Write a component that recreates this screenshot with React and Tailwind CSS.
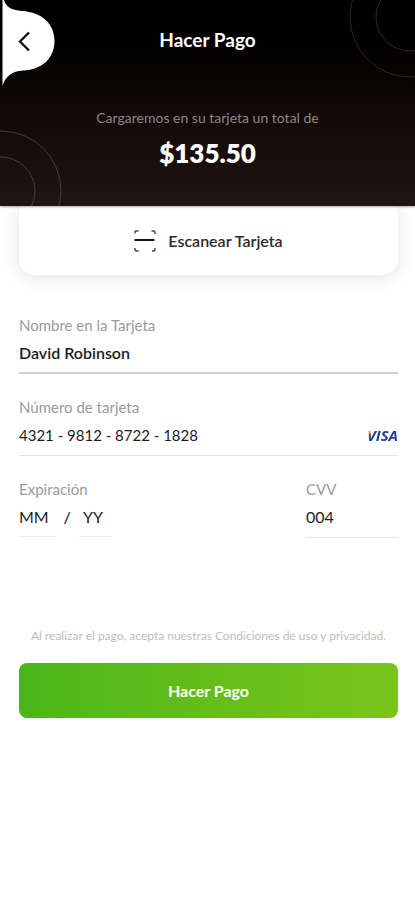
import React, { useState } from "react";

const Rings = ({ className }) => (
    <svg
        viewBox="0 0 122 122"
        fill="none"
        className={className}
        aria-hidden="true"
    >
        <circle cx="61" cy="61" r="60" stroke="currentColor" />
        <circle cx="61" cy="61" r="34" stroke="currentColor" />
    </svg>
);

const ScanIcon = () => (
    <svg
        viewBox="0 0 22 22"
        fill="none"
        stroke="#444444"
        strokeWidth="1.4"
        className="w-[22px] h-[22px]"
        aria-hidden="true"
    >
        <path d="M1 3.500V2Q1 1 2 1H4.500M17.500 1H19.500Q21 1 21 2.500V4M21 18V19.500Q21 21 19.500 21H18M4.500 21H2.500Q1 21 1 19.500V18" />
        <path d="M0.500 10H20.500" stroke="#111111" strokeWidth="2" />
    </svg>
);

const VisaLogo = () => (
    <span
        role="img"
        aria-label="Visa"
        className="bg-[linear-gradient(125deg,#f0a326_20%,#1b3f94_20%)] bg-clip-text font-['Open_Sans',sans-serif] text-[15px] leading-5 font-bold italic text-transparent"
    >
        VISA
    </span>
);

const Field = ({
    id,
    label,
    className,
    lineClassName = "border-b border-[#e4e4e4] pb-2",
    inputClassName = "text-base",
    children,
    ...props
}) => (
    <div className={className}>
        <label htmlFor={id} className="block text-[15px] leading-5 text-[#9a9a9a]">
            {label}
        </label>
        <div className={`flex items-center pt-1.5 ${lineClassName}`}>
            <input
                id={id}
                className={`w-full min-w-0 flex-1 h-6 text-[#1c1c1c] outline-none ${inputClassName}`}
                {...props}
            />
            {children}
        </div>
    </div>
);

const App = () => {
    const [card, setCard] = useState({
        name: "David Robinson",
        number: "4321 - 9812 - 8722 - 1828",
        month: "",
        year: "",
        cvv: "004",
    });

    const changeEventHandler = (e) => {
        setCard({ ...card, [e.target.name]: e.target.value });
    };

    const submitHandler = (e) => {
        e.preventDefault();
    };

    return (
        <div className="min-h-screen bg-white font-[Lato,sans-serif]">
            {/* header */}
            <header className="relative z-10 overflow-hidden bg-linear-to-b from-black via-[#110706] to-[#1f1612] pb-[37px] text-center text-white shadow-[0_1px_2px_rgba(0,0,0,0.35)]">
                <Rings className="absolute -top-11 -right-14 w-[122px] text-[#2e2720]" />
                <Rings className="absolute -bottom-[46px] -left-15 w-[122px] text-[#453d39]" />

                {/* back button */}
                <button
                    type="button"
                    aria-label="Volver"
                    className="absolute top-0 left-0"
                >
                    <svg viewBox="0 0 56 88" fill="none" className="w-14 h-22">
                        <path
                            d="M2.500 0H4C6 7 11 10 22 11C42 12 54.500 24 54.500 41C54.500 58 42 70 23 70.500C12 71 5 77 2.500 86Z"
                            fill="#ffffff"
                        />
                        <path
                            d="M29 32.500L20 41.500L29 50.500"
                            stroke="#111111"
                            strokeWidth="2.300"
                        />
                    </svg>
                </button>

                <h1 className="pt-7 text-[19px] leading-6 font-bold">
                    Hacer Pago
                </h1>
                <p className="mt-14 text-sm leading-5 text-[#8c8785]">
                    Cargaremos en su tarjeta un total de
                </p>
                <p className="mt-[9px] text-[26px] leading-8 font-extrabold">
                    $135.50
                </p>
            </header>

            <main className="pr-[17px] pl-[19px]">
                {/* scan card */}
                <button
                    type="button"
                    className="flex w-full items-center justify-center gap-3 rounded-b-2xl bg-white pt-6 pb-[23px] text-base leading-5 font-semibold text-[#2b2b2b] shadow-[0_2px_18px_rgba(0,0,0,0.12)]"
                >
                    <ScanIcon />
                    Escanear Tarjeta
                </button>

                <form onSubmit={submitHandler} className="pt-10">
                    <Field
                        id="name"
                        name="name"
                        label="Nombre en la Tarjeta"
                        lineClassName="border-b-2 border-[#d2d2d2] pb-[7px]"
                        inputClassName="text-base font-semibold"
                        value={card.name}
                        onChange={changeEventHandler}
                    />
                    <Field
                        id="number"
                        name="number"
                        label="Número de tarjeta"
                        className="mt-[23px]"
                        inputClassName="text-[15px]"
                        value={card.number}
                        onChange={changeEventHandler}
                    >
                        <VisaLogo />
                    </Field>

                    <div className="mt-[23px] flex justify-between">
                        {/* expiration date */}
                        <fieldset>
                            <legend className="text-[15px] leading-5 text-[#9a9a9a]">
                                Expiración
                            </legend>
                            <div className="flex items-start pt-1.5">
                                <input
                                    name="month"
                                    aria-label="Mes"
                                    placeholder="MM"
                                    className="w-9 h-8 pb-2 border-b border-[#ececec] text-base text-[#1c1c1c] placeholder:text-[#1c1c1c] outline-none"
                                    value={card.month}
                                    onChange={changeEventHandler}
                                />
                                <span className="w-6 text-center text-base leading-6">
                                    /
                                </span>
                                <input
                                    name="year"
                                    aria-label="Año"
                                    placeholder="YY"
                                    className="w-8 h-8 pb-2 pl-1 border-b border-[#ececec] text-base text-[#1c1c1c] placeholder:text-[#1c1c1c] outline-none"
                                    value={card.year}
                                    onChange={changeEventHandler}
                                />
                            </div>
                        </fieldset>
                        <Field
                            id="cvv"
                            name="cvv"
                            label="CVV"
                            className="w-[92px]"
                            value={card.cvv}
                            onChange={changeEventHandler}
                        />
                    </div>

                    <p className="mt-22 text-center text-xs leading-5 text-[#bdbdbd]">
                        Al realizar el pago, acepta nuestras Condiciones de uso y
                        privacidad.
                    </p>
                    <button
                        type="submit"
                        className="mt-[17px] h-[55px] w-full rounded-lg bg-linear-to-r from-[#4ab61a] to-[#7ac51b] text-base font-bold text-white"
                    >
                        Hacer Pago
                    </button>
                </form>
            </main>
        </div>
    );
};

export default App;
